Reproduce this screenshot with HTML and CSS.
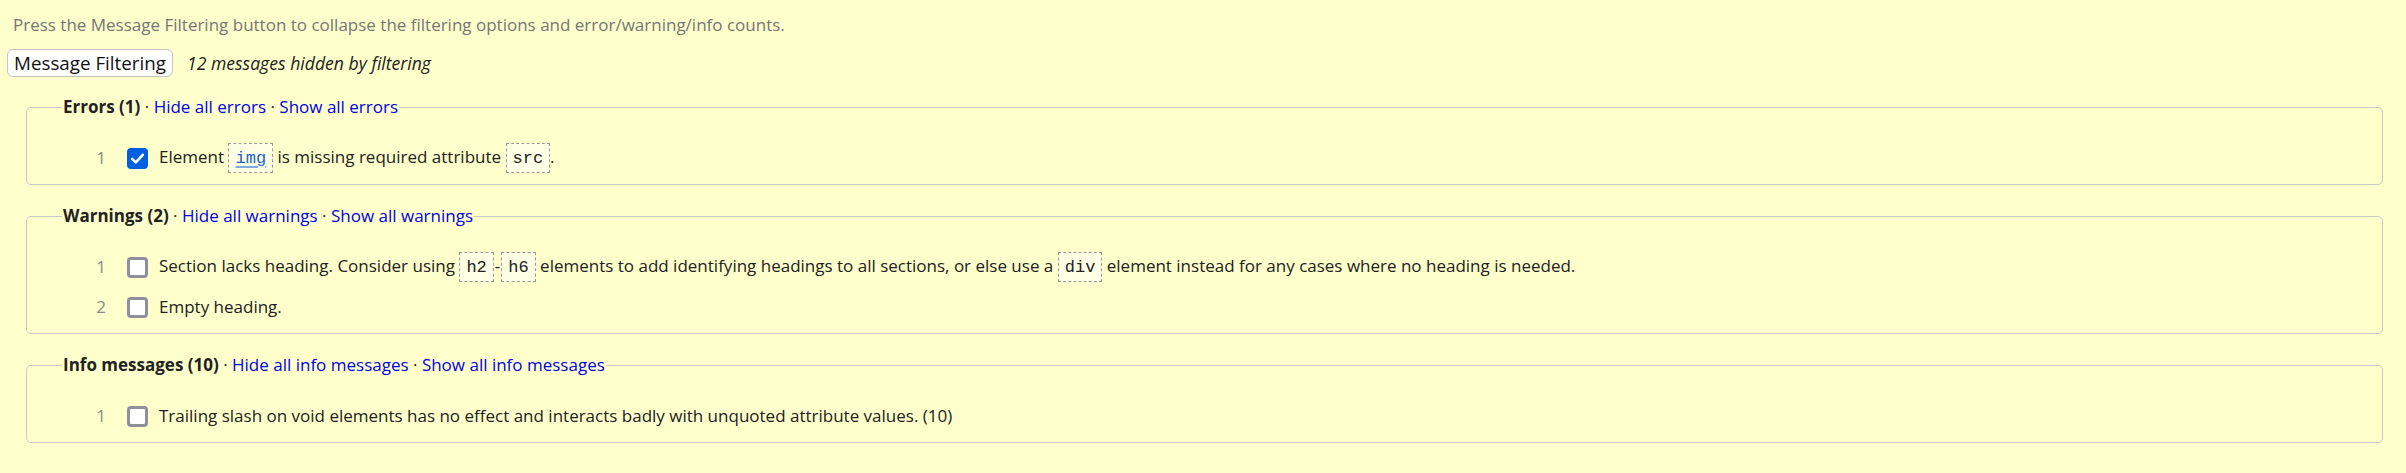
FILE: index.html
```html
<!DOCTYPE html>
<html lang="en">
<head>
<meta charset="utf-8">
<title>Message Filtering</title>
<link rel="stylesheet" href="styles.css">
</head>
<body>
<div class="page">
  <p class="intro">Press the Message Filtering button to collapse the filtering options and error/warning/info counts.</p>
  <div class="toolbar">
    <button class="filter-btn" type="button">Message Filtering</button>
    <em class="hidden-count">12 messages hidden by filtering</em>
  </div>

  <fieldset class="group">
    <legend class="group-title"><b>Errors (1)</b> · <a href="#" class="act">Hide all errors</a> · <a href="#" class="act">Show all errors</a></legend>
    <ol class="msgs">
      <li class="msg">
        <span class="num">1</span>
        <span class="box checked"><svg viewBox="0 0 21 21" width="21" height="21"><path d="M5.2 10.8 L8.8 14.4 L15.8 6.8" fill="none" stroke="#fff" stroke-width="2.6" stroke-linecap="round" stroke-linejoin="round"/></svg></span>
        <span class="text">Element <code class="code code-link">img</code> is missing required attribute <code class="code">src</code>.</span>
      </li>
    </ol>
  </fieldset>

  <fieldset class="group">
    <legend class="group-title"><b>Warnings (2)</b> · <a href="#" class="act">Hide all warnings</a> · <a href="#" class="act">Show all warnings</a></legend>
    <ol class="msgs">
      <li class="msg">
        <span class="num">1</span>
        <span class="box"></span>
        <span class="text">Section lacks heading. Consider using <code class="code">h2</code><span class="dash">-</span><code class="code">h6</code> elements to add identifying headings to all sections, or else use a <code class="code">div</code> element instead for any cases where no heading is needed.</span>
      </li>
      <li class="msg">
        <span class="num">2</span>
        <span class="box"></span>
        <span class="text">Empty heading.</span>
      </li>
    </ol>
  </fieldset>

  <fieldset class="group">
    <legend class="group-title"><b>Info messages (10)</b> · <a href="#" class="act">Hide all info messages</a> · <a href="#" class="act">Show all info messages</a></legend>
    <ol class="msgs">
      <li class="msg">
        <span class="num">1</span>
        <span class="box"></span>
        <span class="text">Trailing slash on void elements has no effect and interacts badly with unquoted attribute values. (10)</span>
      </li>
    </ol>
  </fieldset>
</div>
</body>
</html>
```

FILE: styles.css
```css
html, body {
  margin: 0;
  padding: 0;
  background: #ffffcc;
}
body {
  font-family: "Open Sans", "Noto Sans", sans-serif;
  font-size: 17px;
  line-height: 24px;
  color: #222;
}
.page {
  padding: 13px 23px 0 7px;
}
.intro {
  margin: 0 0 12px 6px;
  color: #767676;
}
.toolbar {
  display: flex;
  align-items: center;
  gap: 14px;
  height: 28px;
  margin-bottom: 18px;
}
.filter-btn {
  font-family: "Open Sans", "Noto Sans", sans-serif;
  font-size: 18.8px;
  line-height: 24px;
  color: #111;
  background: #fff;
  border: 1px solid #c4c4c4;
  border-radius: 6px;
  padding: 1px 6px 1px 6px;
  height: 28px;
  margin: 0;
}
.hidden-count {
  font-style: italic;
  font-size: 17.6px;
  color: #222;
}
.group {
  margin: 0 0 19px 19px;
  border: 1px solid #c8c8c8;
  border-radius: 5px;
  padding: 19px 10px 6px 35px;
  min-width: 0;
}
.group-title {
  padding: 0 1px;
  line-height: 24px;
}
.group-title b {
  font-weight: 700;
  color: #222;
}
.act {
  color: #0000ee;
  text-decoration: none;
}
.msgs {
  list-style: none;
  margin: 0;
  padding: 0;
}
.msg {
  display: flex;
  align-items: center;
  height: 40px;
}
.num {
  width: 44px;
  text-align: right;
  color: #8a8a8a;
  flex: none;
}
.box {
  flex: none;
  box-sizing: border-box;
  width: 21px;
  height: 21px;
  margin: 0 11px 0 21px;
  border: 3px solid #8f8f9d;
  border-radius: 4px;
  background: #fff;
  display: flex;
  align-items: center;
  justify-content: center;
}
.box.checked {
  border: none;
  background: #0060df;
}
.box svg {
  display: block;
}
.text {
  white-space: nowrap;
}
.code {
  font-family: "Liberation Mono", "DejaVu Sans Mono", monospace;
  font-size: 17px;
  color: #222;
  background: #ffffe6;
  border: 1px dashed #9a9a9a;
  padding: 5px 6px 4px;
}
.code-link {
  color: #1a66c8;
  text-decoration: underline;
  text-decoration-color: #7fa9e0;
  text-decoration-thickness: 2px;
  text-underline-offset: 3px;
}
.dash {
  margin: 0 1px;
}
```
